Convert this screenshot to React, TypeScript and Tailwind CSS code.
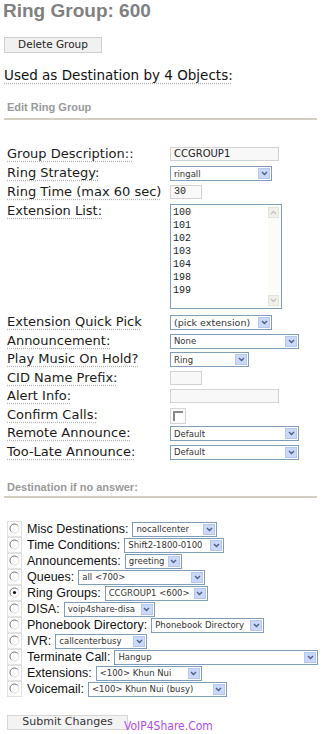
import React from "react"

const dv = "font-['DejaVu_Sans',sans-serif]"
const ar = "font-['Liberation_Sans',Arial,sans-serif]"
const mono = "font-['Liberation_Mono',monospace]"

function Chevron() {
  return (
    <svg width="7" height="5" viewBox="0 0 7 5">
      <path d="M1 1 L3.5 3.5 L6 1" stroke="#4d6185" strokeWidth="1.4" fill="none" />
    </svg>
  )
}

function Select({ w, text, size = "text-[8.5px]" }: { w: string; text: string; size?: string }) {
  return (
    <div className={`flex h-[15px] items-center justify-between border border-[#7f9db9] bg-white pl-[3px] pr-px ${w}`}>
      <span className={`${dv} ${size} overflow-hidden whitespace-nowrap leading-[12px] text-[#333]`}>{text}</span>
      <span className="flex h-[11px] w-[12px] shrink-0 items-center justify-center border border-[#b7c8ef] bg-[#c9d8fb]">
        <Chevron />
      </span>
    </div>
  )
}

function Input({ w, text = "", m = false }: { w: string; text?: string; m?: boolean }) {
  return (
    <div className={`flex h-[14px] items-center border border-[#d2d2d2] bg-[#f8f8f8] pl-[3px] ${w}`}>
      <span className={`${m ? mono : dv} text-[10px] leading-none text-[#222]`}>{text}</span>
    </div>
  )
}

function Label({ children }: { children: React.ReactNode }) {
  return (
    <div className={`${dv} w-[170px] shrink-0 pl-[7px] text-[13px] leading-[16px] text-[#1a1a1a]`}>
      <span className="underline decoration-dotted decoration-[#b5b5b5] underline-offset-[3px]">{children}</span>
    </div>
  )
}

function Row({ h, label, children }: { h: string; label: string; children: React.ReactNode }) {
  return (
    <div className={`flex items-start ${h}`}>
      <Label>{label}</Label>
      <div className="pt-px">{children}</div>
    </div>
  )
}

function Radio({ checked = false }: { checked?: boolean }) {
  return (
    <div className="flex h-[16px] w-[15px] shrink-0 items-start justify-start border border-[#e0e0e0] bg-white pl-[1px] pt-[1px]">
      <svg width="11" height="11" viewBox="0 0 11 11">
        <circle cx="5.5" cy="5.5" r="4.5" fill="white" stroke="#dcdcdc" />
        <path d="M2.3 8.7 A4.5 4.5 0 0 1 8.7 2.3" stroke="#7a7a7a" fill="none" />
        {checked && <circle cx="5.5" cy="5.5" r="1.6" fill="#111" />}
      </svg>
    </div>
  )
}

function DestRow({ label, sel, w, checked }: { label: string; sel: string; w: string; checked?: boolean }) {
  return (
    <div className="flex h-[16px] items-center pl-[7px]">
      <Radio checked={checked} />
      <span className={`${ar} ml-[5px] text-[12.5px] leading-[16px] text-[#111]`}>{label}</span>
      <div className="ml-[4px]">
        <Select w={w} text={sel} />
      </div>
    </div>
  )
}

function ScrollBtn({ up }: { up?: boolean }) {
  return (
    <div className="flex h-[11px] w-[11px] items-center justify-center border border-[#e4e4dc] bg-[#f1f1ea]">
      <svg width="7" height="5" viewBox="0 0 7 5">
        <path d={up ? "M1 4 L3.5 1.5 L6 4" : "M1 1 L3.5 3.5 L6 1"} stroke="#c2c2c2" strokeWidth="1.3" fill="none" />
      </svg>
    </div>
  )
}

const exts = ["100", "101", "102", "103", "104", "198", "199"]

export default function App() {
  return (
    <div className="relative min-h-[734px] w-[329px] bg-white">
      <h1 className={`${ar} pl-[3px] text-[19px] font-bold leading-[22px] text-[#808080]`}>Ring Group: 600</h1>

      <button className={`${dv} ml-[4px] mt-[15px] flex h-[16px] w-[98px] items-center justify-center border border-[#cfcfcf] bg-[#f1f1f1] text-[10.5px] text-[#222]`}>
        Delete Group
      </button>

      <div className={`${dv} mt-[14px] pl-[4px] text-[13.5px] leading-[16px] text-[#111]`}>
        <span className="underline decoration-dotted decoration-[#b5b5b5] underline-offset-[3px]">Used as Destination by 4 Objects:</span>
      </div>

      <div className={`${ar} mt-[18px] pl-[7px] text-[11px] font-bold leading-[13px] text-[#9a9a9a]`}>Edit Ring Group</div>
      <div className="ml-[4px] mt-[4px] h-[2px] w-[313px] bg-[#d3cfc3]" />

      <div className="mt-[26px]">
        <Row h="h-[19px]" label="Group Description::">
          <Input w="w-[109px]" text="CCGROUP1" />
        </Row>
        <Row h="h-[19px]" label="Ring Strategy:">
          <Select w="w-[102px]" text="ringall" />
        </Row>
        <Row h="h-[19px]" label="Ring Time (max 60 sec)">
          <Input w="w-[32px]" text="30" m />
        </Row>
        <Row h="h-[111px]" label="Extension List:">
          <div className="flex h-[105px] w-[112px] border border-[#7f9db9] bg-white">
            <div className={`${mono} flex-1 pl-[2px] pt-[1px] text-[10px] leading-[13px] text-[#222]`}>
              {exts.map((e) => (
                <div key={e}>{e}</div>
              ))}
            </div>
            <div className="flex w-[13px] flex-col justify-between bg-[#fbfbf7] py-[2px]">
              <ScrollBtn up />
              <ScrollBtn />
            </div>
          </div>
        </Row>
        <Row h="h-[18.5px]" label="Extension Quick Pick">
          <Select w="w-[102px]" text="(pick extension)" size="text-[9.5px]" />
        </Row>
        <Row h="h-[18.5px]" label="Announcement:">
          <Select w="w-[129px]" text="None" />
        </Row>
        <Row h="h-[18.5px]" label="Play Music On Hold?">
          <Select w="w-[79px]" text="Ring" />
        </Row>
        <Row h="h-[18.5px]" label="CID Name Prefix:">
          <Input w="w-[32px]" />
        </Row>
        <Row h="h-[18.5px]" label="Alert Info:">
          <Input w="w-[109px]" />
        </Row>
        <Row h="h-[18.5px]" label="Confirm Calls:">
          <div className="flex h-[16px] w-[16px] items-center justify-center border border-[#d6d6d6] bg-[#fafafa]">
            <div className="h-[10px] w-[10px] border-l-[2px] border-t-[2px] border-[#8a8a8a] bg-white" />
          </div>
        </Row>
        <Row h="h-[18.5px]" label="Remote Announce:">
          <Select w="w-[129px]" text="Default" />
        </Row>
        <Row h="h-[18.5px]" label="Too-Late Announce:">
          <Select w="w-[129px]" text="Default" />
        </Row>
      </div>

      <div className={`${ar} mt-[19px] pl-[7px] text-[11px] font-bold leading-[13px] text-[#9a9a9a]`}>Destination if no answer:</div>
      <div className="ml-[4px] mt-[2px] h-[2px] w-[313px] bg-[#d3cfc3]" />

      <div className="mt-[23px]">
        <DestRow label="Misc Destinations:" sel="nocallcenter" w="w-[85px]" />
        <DestRow label="Time Conditions:" sel="Shift2-1800-0100" w="w-[100px]" />
        <DestRow label="Announcements:" sel="greeting" w="w-[57px]" />
        <DestRow label="Queues:" sel="all <700>" w="w-[127px]" />
        <DestRow label="Ring Groups:" sel="CCGROUP1 <600>" w="w-[103px]" checked />
        <DestRow label="DISA:" sel="voip4share-disa" w="w-[91px]" />
        <DestRow label="Phonebook Directory:" sel="Phonebook Directory" w="w-[113px]" />
        <DestRow label="IVR:" sel="callcenterbusy" w="w-[92px]" />
        <DestRow label="Terminate Call:" sel="Hangup" w="w-[204px]" />
        <DestRow label="Extensions:" sel="<100> Khun Nui" w="w-[106px]" />
        <DestRow label="Voicemail:" sel="<100> Khun Nui (busy)" w="w-[139px]" />
      </div>

      <button className={`${dv} ml-[7px] mt-[18px] flex h-[15px] w-[121px] items-center justify-center border border-[#d6d6d6] bg-[#f3f3f3] text-[11px] text-[#333]`}>
        Submit Changes
      </button>

      <div className={`absolute left-[124px] top-[719px] font-['DejaVu_Sans_Condensed','DejaVu_Sans',sans-serif] text-[12px] leading-[14px] text-[#b24cf2]`}>
        VoIP4Share.Com
      </div>
    </div>
  )
}
